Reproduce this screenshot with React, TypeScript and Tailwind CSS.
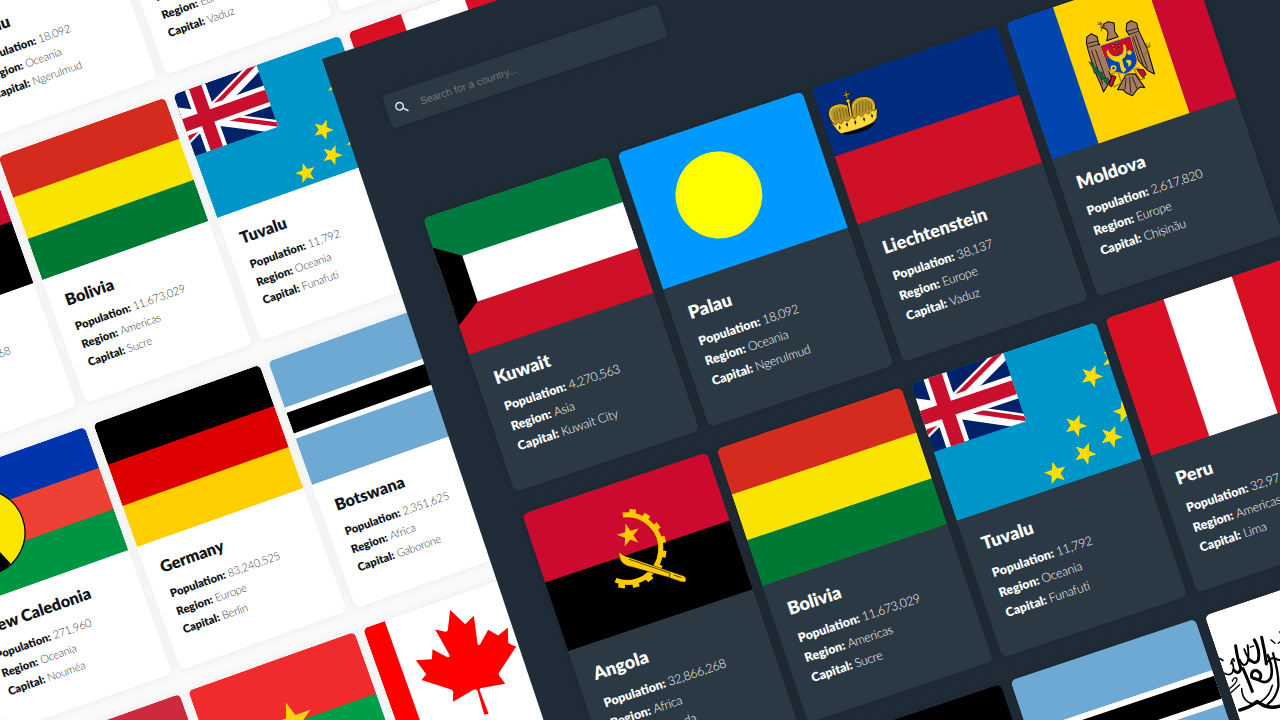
import type { ReactNode } from "react";
import { MdSearch } from "react-icons/md";

const starPoints = (cx: number, cy: number, r: number, deg: number, inner = 0.382) =>
  Array.from({ length: 10 }, (_, i) => {
    const a = ((deg + i * 36) * Math.PI) / 180;
    const d = i % 2 ? r * inner : r;
    return `${(cx + d * Math.cos(a)).toFixed(2)},${(cy + d * Math.sin(a)).toFixed(2)}`;
  }).join(" ");

function Star({ x, y, r, deg, fill, inner }: { x: number; y: number; r: number; deg: number; fill: string; inner?: number }) {
  return <polygon points={starPoints(x, y, r, deg, inner)} fill={fill} />;
}

function Flag({ children }: { children: ReactNode }) {
  return (
    <svg viewBox="0 0 195 144" preserveAspectRatio="none" className="block h-[144.6px] w-full shrink-0">
      {children}
    </svg>
  );
}

function Bands({ colors }: { colors: string[] }) {
  const h = 144 / colors.length;
  return (
    <>
      {colors.map((c, i) => (
        <rect key={i} y={i * h} width="195" height={h + (i < colors.length - 1 ? 1 : 0)} fill={c} />
      ))}
    </>
  );
}

const Kuwait = () => (
  <Flag>
    <Bands colors={["#007a3d", "#ffffff", "#ce1126"]} />
    <path d="M-46.5 0L25.5 48V96L-46.5 144Z" fill="#000" />
  </Flag>
);

const Palau = () => (
  <Flag>
    <rect width="195" height="144" fill="#0099ff" />
    <circle cx="83.1" cy="71.8" r="43.4" fill="#ffff00" />
  </Flag>
);

const Liechtenstein = () => (
  <Flag>
    <Bands colors={["#002b7f", "#ce1126"]} />
    <g transform="translate(0 144) rotate(18.53) scale(.33333) translate(-168 -613)">
      <path d="M112 333Q120 347 150 341Q205 332 220 308L216 300L120 325Z" fill="#000" />
      <path
        d="M98 312C78 292 76 266 94 257C112 246 138 250 147 262Q150 272 151 280Q147 266 150 252C158 232 178 227 194 229C214 230 228 248 221 272L214 292L118 324Z"
        fill="#b9962a"
        stroke="#1a1400"
        strokeWidth="2.5"
      />
      <path
        d="M97 306C82 290 82 268 97 261C116 252 136 256 144 268M155 264C154 250 166 237 186 234C208 232 219 248 217 268"
        fill="none"
        stroke="#f4cf3c"
        strokeWidth="5"
        strokeDasharray="3 2"
      />
      <path
        d="M103 300L98 274M111 300L105 268M120 298L114 264M129 294L123 263M138 290L132 264M166 280L165 250M175 278L174 245M184 276L184 242M193 274L194 241M202 270L203 243M210 268L211 248"
        stroke="#5a4710"
        strokeWidth="1.8"
      />
      <path d="M149 288L141 242" stroke="#1a1400" strokeWidth="11" />
      <path d="M149 288L141 242" stroke="#ffd83d" strokeWidth="5" />
      <circle cx="140" cy="242" r="5.5" fill="#ffd83d" stroke="#1a1400" strokeWidth="1.5" />
      <path d="M138 236L133 212M125 227L147 220" stroke="#1a1400" strokeWidth="6" />
      <path d="M137 234L133.500 214M127 226L145 221" stroke="#e2bd33" strokeWidth="2.6" />
      <path
        d="M90 307L104 314L108 306L120 311L130 299L140 304L150 291L160 297L170 283L182 289L192 277L203 282L210 270L217 272L227 265L226 292L217 305C190 322 145 334 120 340Q112 336 105 327Z"
        fill="#ffd83d"
        stroke="#1a1400"
        strokeWidth="1.2"
      />
      <path
        d="M114 315l4 6l-2 8l-4-6zM136 306l4 6l-2 8l-5-7zM161 299l4 7l-2 8l-5-8zM187 290l4 6l-2 8l-4-7zM211 279l4 7l-2 7l-4-6z"
        fill="#1a1400"
      />
      <path d="M122 339Q170 332 217 308Q214 322 180 333Q140 346 122 339Z" fill="#000" />
    </g>
  </Flag>
);

const Moldova = () => (
  <Flag>
    <rect width="50" height="144" fill="#0046ae" />
    <rect x="49.5" width="96" height="144" fill="#ffd200" />
    <rect x="145.5" width="49.5" height="144" fill="#cc092f" />
    <g
      transform="translate(0 144) rotate(18.53) scale(.33333) translate(-153 -480)"
      stroke="#000"
      strokeWidth="3"
      strokeLinejoin="round"
    >
      <path d="M257 130L258 113L271 103L289 112L292 128L298 138L332 236L308 277L303 262L282 215L262 152Z" fill="#a77b5f" />
      <path d="M376 93L378 72L391 64L408 71L413 92L440 150L461 223L441 213L412 182L392 116Z" fill="#a77b5f" />
      <path d="M308 74L322 67L340 71L342 96L352 112L318 124L322 100L318 90L303 84L310 80Z" fill="#a77b5f" />
      <path d="M376 224L350 270L366 270L377 280L395 288L408 270L418 262L432 264L402 222Z" fill="#a77b5f" />
      <path
        d="M260 132L294 124M263 143L296 134M272 152L306 254M284 150L318 246M378 96L411 86M383 106L414 95M396 110L428 200M404 106L440 206M376 235L372 270M386 232L390 280M394 230L408 266"
        strokeWidth="2.2"
      />
      <path d="M330 222L352 218L362 250L340 262ZM400 210L412 204L432 236L418 240Z" fill="#ffd200" strokeWidth="1.5" />
      <path d="M334 226L346 232L332 262L324 256ZM408 210L428 210L436 224L426 234Z" fill="#cc092f" strokeWidth="2.4" />
      <path d="M264 186l14 6l2 10l10 2l2 12l12 2l4 14l14 4l4 16l-10 0l-8-12l-10-4l-8-14l-10-2l-4-14z" fill="#13654a" strokeWidth="1.2" />
      <path d="M430 172L448 128M434 160L446 156M438 148L450 138M440 144L436 130" stroke="#8a7410" strokeWidth="3" fill="none" />
      <path d="M290 68L314 84M291 76L304 72M300 66L302 96" stroke="#5b4a12" strokeWidth="2.5" />
      <path d="M298 139L389 109L409 178Q412 204 374 224Q334 216 324 212Z" fill="#0046ae" stroke="#e8a33a" />
      <path d="M301 142L387 113L398 148L314 178Z" fill="#cc092f" stroke="none" />
      <g stroke="none" fill="#ffd200">
        <path d="M322 150C328 170 342 172 352 169C366 166 372 156 366 136L373 135C382 158 376 173 364 179L370 202L377 210L368 219L361 212L355 187C338 187 320 176 317 156Z" />
        <circle cx="338" cy="206" r="9" />
        <circle cx="386" cy="159" r="7" />
        <path d="M374 184q12-8 18 2q0 14-12 16q8-8-6-18z" />
      </g>
      <polygon points={starPoints(346, 141, 15, -90)} fill="#ffd200" strokeWidth="1" />
      <circle cx="347" cy="141" r="7" fill="#cc092f" strokeWidth="1.5" />
      <circle cx="338" cy="206" r="3" fill="#0046ae" strokeWidth="1.5" />
    </g>
  </Flag>
);

const Angola = () => (
  <Flag>
    <Bands colors={["#cc092f", "#000000"]} />
    <g transform="translate(0 144) rotate(18.53) scale(.33333) translate(-145 -632)" fill="#ffcb00">
      <path d="M310 225A101 101 0 1 1 288 420" fill="none" stroke="#ffcb00" strokeWidth="15" />
      {[-81, -58.6, -36.5, -14, 8.5, 31, 53, 76, 98].map((a) => (
        <rect key={a} x="104" y="-10" width="15" height="20" transform={`translate(322 325) rotate(${a})`} />
      ))}
      <Star x={328} y={285} r={36} deg={182} fill="#ffcb00" />
      <path
        d="M298 334Q312 348 330 352L495 408Q503 417 497 426L484 424L446 411L340 381Q296 376 298 334Z"
        stroke="#000"
        strokeWidth="1.5"
      />
      <path d="M328 357L450 398M452 398L449 411M462 404L486 412" stroke="#000" strokeWidth="2" fill="none" />
    </g>
  </Flag>
);

const Bolivia = () => (
  <Flag>
    <Bands colors={["#d52b1e", "#f9e300", "#007934"]} />
  </Flag>
);

const Tuvalu = () => (
  <Flag>
    <rect width="195" height="144" fill="#0095c8" />
    <svg x="-46.5" y="0" width="144" height="72" viewBox="0 0 60 30">
      <rect width="60" height="30" fill="#012169" />
      <path d="M0 0L60 30M60 0L0 30" stroke="#fff" strokeWidth="6" />
      <path
        d="M0 0L30 15H26L-4 0ZM30 15L60 30V27.8L34.4 15ZM30 15L60 0H55.6L25.6 15ZM30 15L0 30H4.4L34.4 15Z"
        fill="#c8102e"
      />
      <path d="M30 0V30M0 15H60" stroke="#fff" strokeWidth="10" />
      <path d="M30 0V30M0 15H60" stroke="#c8102e" strokeWidth="6" />
    </svg>
    <g transform="translate(0 144) rotate(18.53) scale(.33333) translate(-168 -632)">
      <Star x={573} y={199} r={35} deg={2} fill="#ffdd00" inner={0.42} />
      <Star x={637} y={147} r={35} deg={2} fill="#ffdd00" inner={0.42} />
      <Star x={672} y={305} r={35} deg={182} fill="#ffdd00" inner={0.42} />
      <Star x={525} y={347} r={35} deg={2} fill="#ffdd00" inner={0.42} />
      <Star x={632} y={380} r={35} deg={2} fill="#ffdd00" inner={0.42} />
      <Star x={553} y={431} r={35} deg={2} fill="#ffdd00" inner={0.42} />
      <Star x={465} y={489} r={35} deg={182} fill="#ffdd00" inner={0.42} />
    </g>
  </Flag>
);

const Peru = () => (
  <Flag>
    <rect width="195" height="144" fill="#d91023" />
    <rect x="61.5" width="72" height="144" fill="#fff" />
  </Flag>
);

const NewCaledonia = () => (
  <Flag>
    <Bands colors={["#0035ad", "#ed4135", "#009543"]} />
    <circle cx="49.5" cy="72" r="47" fill="#fae600" stroke="#000" strokeWidth="1.4" />
    <g transform="translate(0 144) rotate(19.55) scale(.36812) translate(113 -777)">
      <path d="M-70 580L0 605L33 640Q18 658 -8 668L-60 670Z" fill="#000" />
    </g>
  </Flag>
);

const Germany = () => (
  <Flag>
    <Bands colors={["#000000", "#dd0000", "#ffce00"]} />
  </Flag>
);

const Botswana = () => (
  <Flag>
    <rect width="195" height="144" fill="#6da9d2" />
    <rect y="54" width="195" height="36" fill="#fff" />
    <rect y="60" width="195" height="24" fill="#000" />
  </Flag>
);

const Afghanistan = () => (
  <Flag>
    <rect width="195" height="144" fill="#fff" />
    <g
      transform="rotate(18.53) scale(.33333) translate(-341 -77)"
      fill="none"
      stroke="#000"
      strokeLinecap="round"
      strokeLinejoin="round"
    >
      <path d="M386 206L396 212M400 250Q424 262 428 236Q424 206 420 222Q426 196 430 214" strokeWidth="5" />
      <path d="M434 168Q440 210 450 236Q442 258 428 240" strokeWidth="9" />
      <path d="M470 166Q476 206 468 220Q456 234 446 210M460 178Q470 208 484 214" strokeWidth="6" />
      <path d="M490 150Q508 180 502 210Q494 224 478 212M512 142Q522 184 526 222" strokeWidth="9" />
      <path d="M526 220Q540 200 554 206Q566 214 574 206" strokeWidth="6" />
      <path d="M456 236Q468 262 484 304" strokeWidth="9" />
      <path d="M482 262Q478 240 498 242Q518 254 504 270L486 264" strokeWidth="9" />
      <path d="M530 196Q548 232 540 262Q528 284 506 272" strokeWidth="8" />
      <path d="M412 298Q438 280 438 266Q430 258 424 274M418 310L446 284" strokeWidth="4" />
      <path d="M452 296Q454 338 492 342Q532 330 544 286" strokeWidth="5" />
      <path d="M446 360Q480 350 498 334Q540 368 590 336" strokeWidth="10" />
      <path d="M546 190Q564 250 562 290Q554 326 530 342" strokeWidth="7" />
      <path d="M540 150L552 160M566 126L572 134M562 160L574 150M478 172L488 168" strokeWidth="4" />
    </g>
  </Flag>
);

const Latvia = () => (
  <Flag>
    <Bands colors={["#cd2a3e", "#ffffff", "#cd2a3e"]} />
  </Flag>
);

const BurkinaFaso = () => (
  <Flag>
    <Bands colors={["#ef2b2d", "#009e49"]} />
    <Star x={97.5} y={72} r={24} deg={-90} fill="#fcd116" />
  </Flag>
);

const Canada = () => (
  <Flag>
    <rect width="195" height="144" fill="#fff" />
    <rect width="25.5" height="144" fill="#ff0000" />
    <rect x="169.5" width="25.5" height="144" fill="#ff0000" />
    <g transform="rotate(19.55) scale(.36812) translate(-308.4 -986)">
      <path
        d="M570 930L615 972L641 947L652 1030Q654 1038 660 1032L684 989L714 1006L743 982L744 1026Q746 1032 768 1039L716 1117Q714 1126 720 1130L735 1150L664 1163Q656 1164 659 1172L685 1240L672 1243L652 1172Q648 1164 640 1168L578 1204L579 1176Q578 1168 568 1166L484 1139L498 1122L467 1080L515 1077L517 1047L560 1070Q571 1073 568 1064L525 988L556 995Q563 995 563 988Z"
        fill="#ff0000"
      />
    </g>
  </Flag>
);

type Country = { name: string; population: string; region: string; capital: string; Art: () => ReactNode };

const countries: Country[] = [
  { name: "Kuwait", population: "4,270,563", region: "Asia", capital: "Kuwait City", Art: Kuwait },
  { name: "Palau", population: "18,092", region: "Oceania", capital: "Ngerulmud", Art: Palau },
  { name: "Liechtenstein", population: "38,137", region: "Europe", capital: "Vaduz", Art: Liechtenstein },
  { name: "Moldova", population: "2,617,820", region: "Europe", capital: "Chișinău", Art: Moldova },
  { name: "Angola", population: "32,866,268", region: "Africa", capital: "Luanda", Art: Angola },
  { name: "Bolivia", population: "11,673,029", region: "Americas", capital: "Sucre", Art: Bolivia },
  { name: "Tuvalu", population: "11,792", region: "Oceania", capital: "Funafuti", Art: Tuvalu },
  { name: "Peru", population: "32,971,846", region: "Americas", capital: "Lima", Art: Peru },
  { name: "New Caledonia", population: "271,960", region: "Oceania", capital: "Nouméa", Art: NewCaledonia },
  { name: "Germany", population: "83,240,525", region: "Europe", capital: "Berlin", Art: Germany },
  { name: "Botswana", population: "2,351,625", region: "Africa", capital: "Gaborone", Art: Botswana },
  { name: "Afghanistan", population: "38,928,341", region: "Asia", capital: "Kabul", Art: Afghanistan },
  { name: "Latvia", population: "1,901,548", region: "Europe", capital: "Riga", Art: Latvia },
  { name: "Burkina Faso", population: "20,903,278", region: "Africa", capital: "Ouagadougou", Art: BurkinaFaso },
  { name: "Canada", population: "38,005,238", region: "Americas", capital: "Ottawa", Art: Canada },
];

function Detail({ label, value, dark }: { label: string; value: string; dark: boolean }) {
  return (
    <p className="flex h-[21px] items-center gap-[3px] whitespace-nowrap text-[12.4px] leading-none">
      <span className="font-extrabold">{label}:</span>
      <span
        className={
          dark
            ? "font-light tracking-[-0.22px] text-white"
            : "font-light tracking-[-0.22px] text-[#111517]/90"
        }
      >
        {value}
      </span>
    </p>
  );
}

function Card({ country, dark }: { country: Country; dark: boolean }) {
  const { name, population, region, capital, Art } = country;
  return (
    <article
      className={
        dark
          ? "flex h-[289px] flex-col overflow-hidden rounded-[6px] bg-[#2b3944] text-white shadow-[0_0_8px_2px_rgba(0,0,0,0.12)]"
          : "flex h-[289px] flex-col overflow-hidden rounded-[6px] bg-white text-[#111517] shadow-[0_0_8px_2px_rgba(0,0,0,0.05)]"
      }
    >
      <Art />
      <div className="flex flex-col px-[17.5px] pt-[17px]">
        <h2 className="-ml-[0.6px] mb-[8px] flex h-[26px] items-center whitespace-nowrap pb-px text-[18px] font-extrabold leading-none">
          {name}
        </h2>
        <Detail label="Population" value={population} dark={dark} />
        <Detail label="Region" value={region} dark={dark} />
        <Detail label="Capital" value={capital} dark={dark} />
      </div>
    </article>
  );
}

function Page({ dark }: { dark: boolean }) {
  const visible = dark ? countries.slice(0, 12) : countries;
  return (
    <div
      className={
        dark
          ? "flex h-[1500px] w-[1400px] flex-col bg-[#202c37] px-[45.2px] pt-[54px]"
          : "flex h-[1500px] w-[1400px] flex-col bg-[#fafafa] px-[45.2px] pt-[54px]"
      }
    >
      <div
        className={
          dark
            ? "flex h-[35px] w-[290px] items-center gap-[11.5px] rounded-[4px] bg-[#2b3944] pl-[6.5px] text-white/90 shadow-[0_0_8px_2px_rgba(0,0,0,0.12)]"
            : "flex h-[35px] w-[290px] items-center gap-[11.5px] rounded-[4px] bg-white pl-[6.5px] text-[#111517] shadow-[0_0_8px_2px_rgba(0,0,0,0.05)]"
        }
      >
        <MdSearch className="size-[16.5px]" />
        <span className="font-['Liberation_Sans',sans-serif] text-[10.4px] text-[#757575]">
          Search for a country...
        </span>
      </div>
      <main className="mt-[93.6px] grid grid-cols-[repeat(4,195px)] gap-x-[9.8px] gap-y-[23.7px]">
        {visible.map((c) => (
          <Card key={c.name} country={c} dark={dark} />
        ))}
      </main>
    </div>
  );
}

export default function App() {
  return (
    <div className="relative h-[720px] w-[1280px] overflow-hidden bg-[#fafafa] font-['Lato','Open_Sans',sans-serif]">
      <div className="absolute left-[-365px] top-[-189.6px] origin-top-left [transform:rotate(-19.55deg)_scale(0.9055)]">
        <Page dark={false} />
      </div>
      <div className="absolute left-[322px] top-[58.6px] origin-top-left [transform:rotate(-18.53deg)]">
        <Page dark />
      </div>
    </div>
  );
}
